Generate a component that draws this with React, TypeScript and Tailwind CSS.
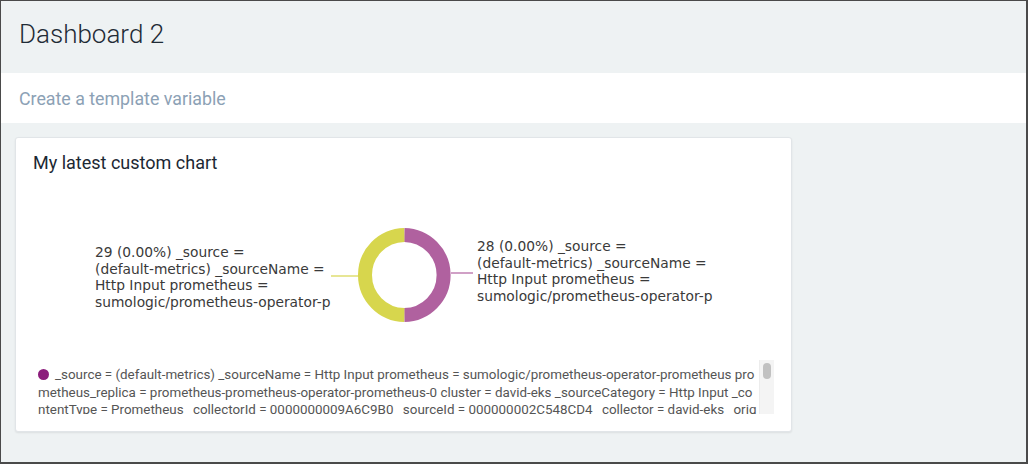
import React from "react";

const legendLines = [
  "_source = (default-metrics) _sourceName = Http Input prometheus = sumologic/prometheus-operator-prometheus pro",
  "metheus_replica = prometheus-prometheus-operator-prometheus-0 cluster = david-eks _sourceCategory = Http Input _co",
  "ntentType = Prometheus _collectorId = 0000000009A6C9B0 _sourceId = 000000002C548CD4 _collector = david-eks _orig",
];

// donut ring, center at (cx, cy)
function Donut() {
  const cx = 389;
  const cy = 101;
  const r = 40;
  const a1 = (-1 * Math.PI) / 180 - Math.PI / 2;
  const a2 = (181 * Math.PI) / 180 - Math.PI / 2;
  const p = (a: number) => `${cx + r * Math.cos(a)} ${cy + r * Math.sin(a)}`;
  return (
    <svg className="absolute left-0 top-0" width="777" height="186">
      <path d={`M ${p(a1)} A ${r} ${r} 0 0 1 ${p(a2)}`} fill="none" stroke="#b0619f" strokeWidth="14" />
      <path d={`M ${p(a2)} A ${r} ${r} 0 0 1 ${p(a1 + 2 * Math.PI)}`} fill="none" stroke="#d7d64d" strokeWidth="14" />
      <line x1="315" y1="102" x2="343" y2="102" stroke="#d7d64d" strokeWidth="1.2" />
      <line x1="435" y1="99" x2="457" y2="99" stroke="#b0619f" strokeWidth="1.2" />
    </svg>
  );
}

export default function App() {
  return (
    <div className="w-[1028px] h-[464px] overflow-hidden border-t border-l border-r-2 border-b-2 border-[#4a4a4a] bg-[#eef2f3] font-['Roboto',sans-serif] flex flex-col">
      {/* page header */}
      <div className="h-[72px] shrink-0 flex items-center px-[18px] pb-[7px]">
        <h1 className="text-[26px] font-light text-[#1f2b36] leading-none">Dashboard 2</h1>
      </div>

      {/* template variables */}
      <div className="h-[50px] shrink-0 bg-white flex items-center px-[18px] pt-[2px]">
        <span className="text-[17.8px] text-[#8ca1b5]">Create a template variable</span>
      </div>

      {/* panel */}
      <div className="ml-[14px] mt-[14px] w-[777px] h-[295px] bg-white rounded-[3px] border border-[#e1e5e8] shadow-[0_1px_2px_rgba(0,0,0,0.08)] flex flex-col">
        <div className="px-[17px] pt-[13px] h-[36px] text-[18px] leading-[24px] text-[#1c2833]">My latest custom chart</div>

        <div className="relative h-[186px] shrink-0">
          <Donut />
          <div className="absolute left-[79px] top-[70px] font-['DejaVu_Sans',sans-serif] text-[13.8px] leading-[16.5px] text-[#3a3a3a] whitespace-nowrap">
            <div>29 (0.00%) _source =</div>
            <div>(default-metrics) _sourceName =</div>
            <div>Http Input prometheus =</div>
            <div>sumologic/prometheus-operator-p</div>
          </div>
          <div className="absolute left-[461px] top-[64px] font-['DejaVu_Sans',sans-serif] text-[13.8px] leading-[16.5px] text-[#3a3a3a] whitespace-nowrap">
            <div>28 (0.00%) _source =</div>
            <div>(default-metrics) _sourceName =</div>
            <div>Http Input prometheus =</div>
            <div>sumologic/prometheus-operator-p</div>
          </div>
        </div>

        {/* legend */}
        <div className="ml-[22px] w-[736px] h-[54px] flex">
          <div className="flex-1 overflow-hidden pt-[6px] text-[13.4px] leading-[17.5px] text-[#555555] whitespace-nowrap">
            {legendLines.map((line, i) => (
              <div key={i} className="flex items-center">
                {i === 0 && <span className="inline-block w-[11px] h-[11px] rounded-full bg-[#8c1d7c] mr-[6px]" />}
                <span>{line}</span>
              </div>
            ))}
          </div>
          <div className="w-[15px] h-full bg-[#f4f4f4] border-l border-[#ececec] pt-[3px] flex justify-center">
            <div className="w-[8px] h-[16px] rounded-[4px] bg-[#c1c1c1]" />
          </div>
        </div>
      </div>
    </div>
  );
}
